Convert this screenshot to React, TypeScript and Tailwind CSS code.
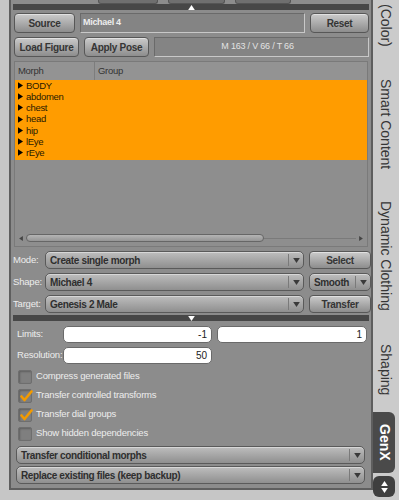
import React from 'react';

const font = { fontFamily: '"Liberation Sans", Arial, sans-serif' };

const Arrow = ({ dir = 'down', className = '' }: { dir?: 'down' | 'up' | 'left' | 'right'; className?: string }) => {
  const pts = {
    down: '0,0 8,0 4,6',
    up: '0,6 8,6 4,0',
    left: '6,0 6,8 0,4',
    right: '0,0 0,8 6,4',
  }[dir];
  const vb = dir === 'down' || dir === 'up' ? '0 0 8 6' : '0 0 6 8';
  return (
    <svg viewBox={vb} className={className}>
      <polygon points={pts} fill="currentColor" />
    </svg>
  );
};

const Btn = ({ children, className = '' }: { children: React.ReactNode; className?: string }) => (
  <div
    className={`flex shrink-0 items-center justify-center rounded-[4px] border border-[#575757] bg-linear-to-b from-[#cbcbcb] to-[#8d8d8d] text-[10px] font-bold tracking-[-0.3px] text-[#353535] shadow-[inset_0_1px_0_rgba(255,255,255,0.45)] ${className}`}
  >
    {children}
  </div>
);

const Select = ({ label, className = '' }: { label: string; className?: string }) => (
  <div
    className={`flex h-[18px] shrink-0 items-center rounded-[5px] border border-[#5a5a5a] bg-linear-to-b from-[#bebebe] to-[#8f8f8f] shadow-[inset_0_1px_0_rgba(255,255,255,0.4)] ${className}`}
  >
    <span className="flex-1 overflow-hidden whitespace-nowrap pl-[4px] text-[10px] font-bold tracking-[-0.35px] text-[#2f2f2f]">{label}</span>
    <span className="h-[12px] w-px bg-[#7a7a7a]" />
    <span className="flex w-[14px] justify-center text-[#3a3a3a]">
      <Arrow className="h-[5px] w-[7px]" />
    </span>
  </div>
);

const Check = ({ label, checked }: { label: string; checked?: boolean }) => (
  <div className="flex h-[19px] items-center gap-[4px] pl-[5px]">
    <div className="relative h-[14px] w-[14px] rounded-[2px] border border-[#6e6e6e] bg-[#7f7f7f] shadow-[inset_1px_1px_2px_rgba(0,0,0,0.25)]">
      {checked && (
        <svg viewBox="0 0 14 14" className="absolute -top-[1px] left-0 h-[14px] w-[14px]">
          <path d="M2.5 7.5 L5.5 11 L12.5 2.5" stroke="#f29a00" strokeWidth="2.6" fill="none" strokeLinecap="round" strokeLinejoin="round" />
        </svg>
      )}
    </div>
    <span className="text-[9.5px] tracking-[-0.2px] text-[#ececec]">{label}</span>
  </div>
);

const Divider = ({ dir }: { dir: 'up' | 'down' }) => (
  <div className="flex h-[6px] items-center justify-center bg-[#474747] text-white">
    <Arrow dir={dir} className="h-[5px] w-[7px]" />
  </div>
);

const morphs = ['BODY', 'abdomen', 'chest', 'head', 'hip', 'lEye', 'rEye'];

const Tab = ({ children, className = '' }: { children: React.ReactNode; className?: string }) => (
  <div className={`flex shrink-0 justify-center ${className}`}>
    <span className="whitespace-nowrap text-[14px] leading-[16px] text-[#363636] [writing-mode:vertical-rl]">{children}</span>
  </div>
);

const labelCls = 'shrink-0 whitespace-nowrap text-[9.5px] tracking-[-0.2px] text-[#ececec]';

export default function App() {
  return (
    <div style={font} className="flex h-[500px] w-[399px] overflow-hidden bg-[#c6c6c6]">
      <div className="w-[9px] shrink-0" />
      {/* main panel */}
      <div className="flex h-[490px] w-[364px] shrink-0 flex-col border-x-2 border-b-2 border-[#5e5e5e] bg-[#8c8c8c] px-[2px]">
        <div className="flex h-[4px] gap-[10px] pl-[85px]">
          <div className="w-[60px] rounded-b-[3px] border-x border-b border-[#555] bg-[#6f6f6f]" />
          <div className="w-[57px] rounded-b-[3px] border-x border-b border-[#555] bg-[#6f6f6f]" />
          <div className="w-[56px] rounded-b-[3px] border-x border-b border-[#555] bg-[#6f6f6f]" />
        </div>
        <Divider dir="up" />

        <div className="mt-[3px] flex h-[20px] gap-[5px] pl-[1px]">
          <Btn className="w-[61px]">Source</Btn>
          <div className="flex flex-1 items-center border border-t-[#6a6a6a] border-l-[#6a6a6a] border-b-[#c8c8c8] border-r-[#c8c8c8] bg-[#848484] pl-[2px] text-[9px] font-bold tracking-[-0.3px] text-[#ededed]">
            Michael 4
          </div>
          <Btn className="w-[59px]">Reset</Btn>
        </div>

        <div className="mt-[4px] flex h-[20px] gap-[5px] pl-[1px]">
          <Btn className="w-[65px]">Load Figure</Btn>
          <Btn className="w-[65px]">Apply Pose</Btn>
          <div className="flex flex-1 items-center justify-center border border-t-[#6a6a6a] border-l-[#6a6a6a] border-b-[#c8c8c8] border-r-[#c8c8c8] bg-[#848484] pr-[8px] text-[9px] tracking-[-0.2px] text-[#e2e2e2]">
            M 163 / V 66 / T 66
          </div>
        </div>

        {/* table */}
        <div className="mt-[4px] ml-[1px] mr-[1px] flex h-[186px] flex-col border border-[#7a7a7a] bg-[#8e8e8e]">
          <div className="flex h-[18px] items-center bg-[#939393] text-[9.5px] tracking-[-0.3px] text-[#333]">
            <div className="flex h-full w-[80px] items-center border-r border-[#7d7d7d] pl-[3px]">Morph</div>
            <div className="pl-[3px]">Group</div>
          </div>
          <div className="bg-[#ff9c00] pb-[2px]">
            {morphs.map((m) => (
              <div key={m} className="flex h-[11.2px] items-center gap-[3px] pl-[3px] text-[9.5px] leading-none tracking-[-0.3px] text-[#2a1a00]">
                <Arrow dir="right" className="h-[7px] w-[5px] text-black" />
                {m}
              </div>
            ))}
          </div>
          <div className="flex-1" />
          <div className="mb-[3px] flex h-[10px] items-center gap-[3px] px-[4px] text-[#444]">
            <Arrow dir="left" className="h-[5px] w-[4px]" />
            <div className="relative flex h-[8px] flex-1 items-center">
              <div className="h-px w-full bg-[#7a7a7a]" />
              <div className="absolute left-0 top-0 h-[8px] w-[238px] rounded-full border border-[#666] bg-linear-to-b from-[#b4b4b4] to-[#959595]" />
            </div>
            <Arrow dir="right" className="h-[5px] w-[4px]" />
          </div>
        </div>

        {/* mode rows */}
        <div className="mt-[4px] flex flex-col gap-[4px]">
          <div className="flex h-[18px] items-center">
            <span className={`w-[32px] ${labelCls}`}>Mode:</span>
            <Select label="Create single morph" className="w-[259px]" />
            <Btn className="ml-[5px] h-[18px] w-[62px]">Select</Btn>
          </div>
          <div className="flex h-[18px] items-center">
            <span className={`w-[32px] ${labelCls}`}>Shape:</span>
            <Select label="Michael 4" className="w-[259px]" />
            <Select label="Smooth" className="ml-[5px] w-[62px]" />
          </div>
          <div className="flex h-[18px] items-center">
            <span className={`w-[32px] ${labelCls}`}>Target:</span>
            <Select label="Genesis 2 Male" className="w-[259px]" />
            <Btn className="ml-[5px] h-[18px] w-[62px]">Transfer</Btn>
          </div>
        </div>

        <div className="mt-[2px]">
          <Divider dir="down" />
        </div>

        <div className="mt-[5px] flex h-[17px] items-center">
          <span className={`w-[50px] pl-[4px] ${labelCls}`}>Limits:</span>
          <div className="flex h-[17px] w-[149px] items-center justify-end rounded-[5px] border border-[#6a6a6a] bg-white pr-[4px] text-[10px] text-[#222]">-1</div>
          <div className="ml-[5px] flex h-[17px] w-[150px] items-center justify-end rounded-[5px] border border-[#6a6a6a] bg-white pr-[4px] text-[10px] text-[#222]">1</div>
        </div>
        <div className="mt-[4px] flex h-[17px] items-center">
          <span className={`w-[50px] pl-[4px] ${labelCls}`}>Resolution:</span>
          <div className="flex h-[17px] w-[149px] items-center justify-end rounded-[5px] border border-[#6a6a6a] bg-white pr-[4px] text-[10px] text-[#222]">50</div>
        </div>

        <div className="mt-[3px] flex flex-col">
          <Check label="Compress generated files" />
          <Check label="Transfer controlled transforms" checked />
          <Check label="Transfer dial groups" checked />
          <Check label="Show hidden dependencies" />
        </div>

        <div className="mt-[3px] flex flex-col gap-[2px] pl-[3px] pr-[4px]">
          <Select label="Transfer conditional morphs" />
          <Select label="Replace existing files (keep backup)" />
        </div>
      </div>

      {/* right tabs */}
      <div className="flex w-[26px] shrink-0 flex-col bg-[#cbcbcb]">
        <Tab className="pt-[4px] pb-[16px]">(Color)</Tab>
        <Tab className="py-[16px]">Smart Content</Tab>
        <Tab className="pt-[16px] pb-[17px]">Dynamic Clothing</Tab>
        <Tab className="pt-[16px] pb-[15px]">Shaping</Tab>
        <div className="mt-[2px] flex h-[61px] w-[22px] shrink-0 items-center justify-center rounded-r-[6px] bg-[#4a4a4a]">
          <span className="text-[14px] font-bold text-white [writing-mode:vertical-rl]">GenX</span>
        </div>
        <div className="mt-[3px] flex h-[21px] w-[22px] shrink-0 flex-col items-center justify-center gap-[2px] rounded-[6px] bg-[#3f3f3f] text-white">
          <Arrow dir="up" className="h-[5px] w-[7px]" />
          <Arrow dir="down" className="h-[5px] w-[7px]" />
        </div>
      </div>
    </div>
  );
}
